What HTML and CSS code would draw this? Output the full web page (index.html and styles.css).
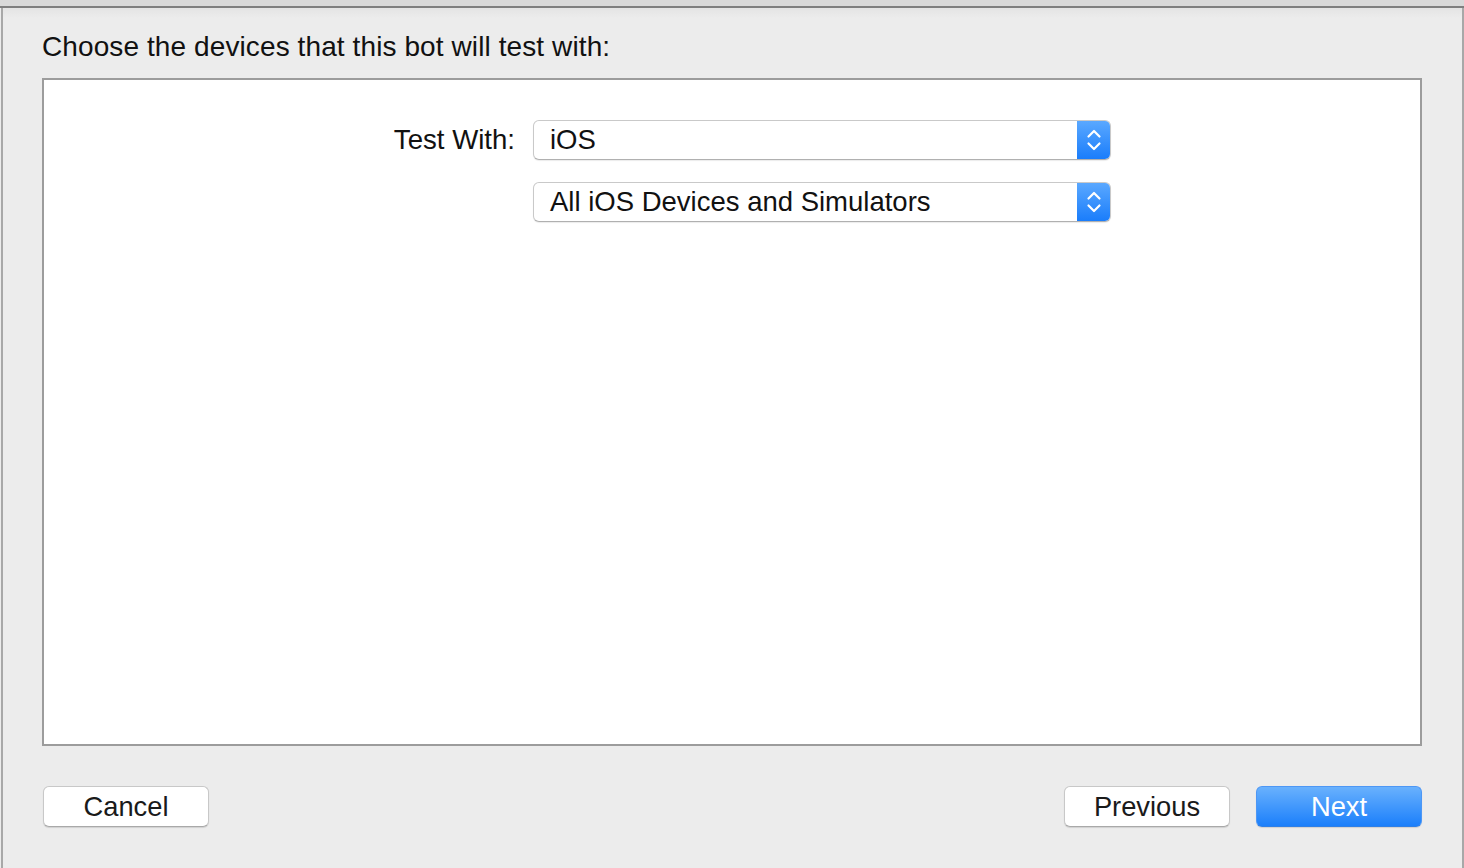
FILE: index.html
```html
<!DOCTYPE html>
<html>
<head>
<meta charset="utf-8">
<link rel="stylesheet" href="styles.css">
</head>
<body>
<div class="topstrip"></div>
<div class="window">
  <div class="sheet">
    <h1 class="title">Choose the devices that this bot will test with:</h1>
    <div class="panel">
      <div class="form">
        <div class="row">
          <label class="label">Test With:</label>
          <div class="popup">
            <span class="popup-text">iOS</span>
            <span class="popup-arrows">
              <svg width="16" height="28" viewBox="0 0 16 28"><path d="M2.5 10.5 L8 5 L13.5 10.5 M2.5 17.5 L8 23 L13.5 17.5" fill="none" stroke="#fff" stroke-width="2.2" stroke-linecap="round" stroke-linejoin="round"/></svg>
            </span>
          </div>
        </div>
        <div class="row">
          <span class="label"></span>
          <div class="popup">
            <span class="popup-text">All iOS Devices and Simulators</span>
            <span class="popup-arrows">
              <svg width="16" height="28" viewBox="0 0 16 28"><path d="M2.5 10.5 L8 5 L13.5 10.5 M2.5 17.5 L8 23 L13.5 17.5" fill="none" stroke="#fff" stroke-width="2.2" stroke-linecap="round" stroke-linejoin="round"/></svg>
            </span>
          </div>
        </div>
      </div>
    </div>
    <div class="footer">
      <button class="btn">Cancel</button>
      <div class="right-buttons">
        <button class="btn">Previous</button>
        <button class="btn primary">Next</button>
      </div>
    </div>
  </div>
</div>
</body>
</html>
```

FILE: styles.css
```css
* { box-sizing: border-box; }
html, body { margin: 0; padding: 0; }
body {
  width: 1464px;
  height: 868px;
  background: #ececec;
  font-family: "Liberation Sans", Arial, sans-serif;
  color: #1a1a1a;
  overflow: hidden;
}
.topstrip {
  height: 8px;
  background: #d9d9d9;
  border-bottom: 2px solid #7f7f7f;
}
.window {
  height: 860px;
  border-left: 2px solid #a8a8a8;
  border-right: 2px solid #a8a8a8;
  margin: 0 0 0 1px;
  width: 1463px;
  background: linear-gradient(#e4e4e4 0, #ececec 10px);
}
.sheet {
  padding: 0 40px 0 39px;
}
.title {
  margin: 0;
  padding-top: 25px;
  height: 70px;
  font-size: 28px;
  letter-spacing: 0.1px;
  font-weight: normal;
  line-height: 28px;
  color: #111;
}
.panel {
  height: 668px;
  background: #fff;
  border: 2px solid #9c9c9c;
  padding-top: 40px;
}
.form {
  display: flex;
  flex-direction: column;
  gap: 22px;
}
.row {
  display: flex;
  align-items: center;
}
.label {
  width: 489px;
  text-align: right;
  font-size: 27.6px;
  color: #111;
  padding-right: 18px;
}
.popup {
  width: 578px;
  height: 40px;
  background: #fff;
  border: 1px solid #c9c9c9;
  border-bottom-color: #b0b0b0;
  border-radius: 6px;
  display: flex;
  align-items: stretch;
  box-shadow: 0 1px 1px rgba(0,0,0,0.08);
  overflow: hidden;
}
.popup-text {
  flex: 1;
  font-size: 27.5px;
  line-height: 38px;
  padding-left: 16px;
  color: #111;
}
.popup-arrows {
  width: 33px;
  background: linear-gradient(#5aa8ff, #1a7dfb);
  display: flex;
  align-items: center;
  justify-content: center;
}
.footer {
  display: flex;
  justify-content: space-between;
  padding-top: 40px;
  padding-left: 1px;
}
.right-buttons {
  display: flex;
  gap: 26px;
}
.btn {
  width: 166px;
  height: 41px;
  font-family: "Liberation Sans", Arial, sans-serif;
  font-size: 27.3px;
  color: #1a1a1a;
  background: #fff;
  border: 1px solid #c8c8c8;
  border-bottom-color: #a9a9a9;
  border-radius: 6px;
  box-shadow: 0 1px 1px rgba(0,0,0,0.12);
  padding: 0;
  line-height: 38px;
}
.btn.primary {
  color: #fff;
  background: linear-gradient(#69b1fd, #1b7ffb);
  border-color: #4d97f5;
  border-bottom-color: #2f7fe6;
}
```
